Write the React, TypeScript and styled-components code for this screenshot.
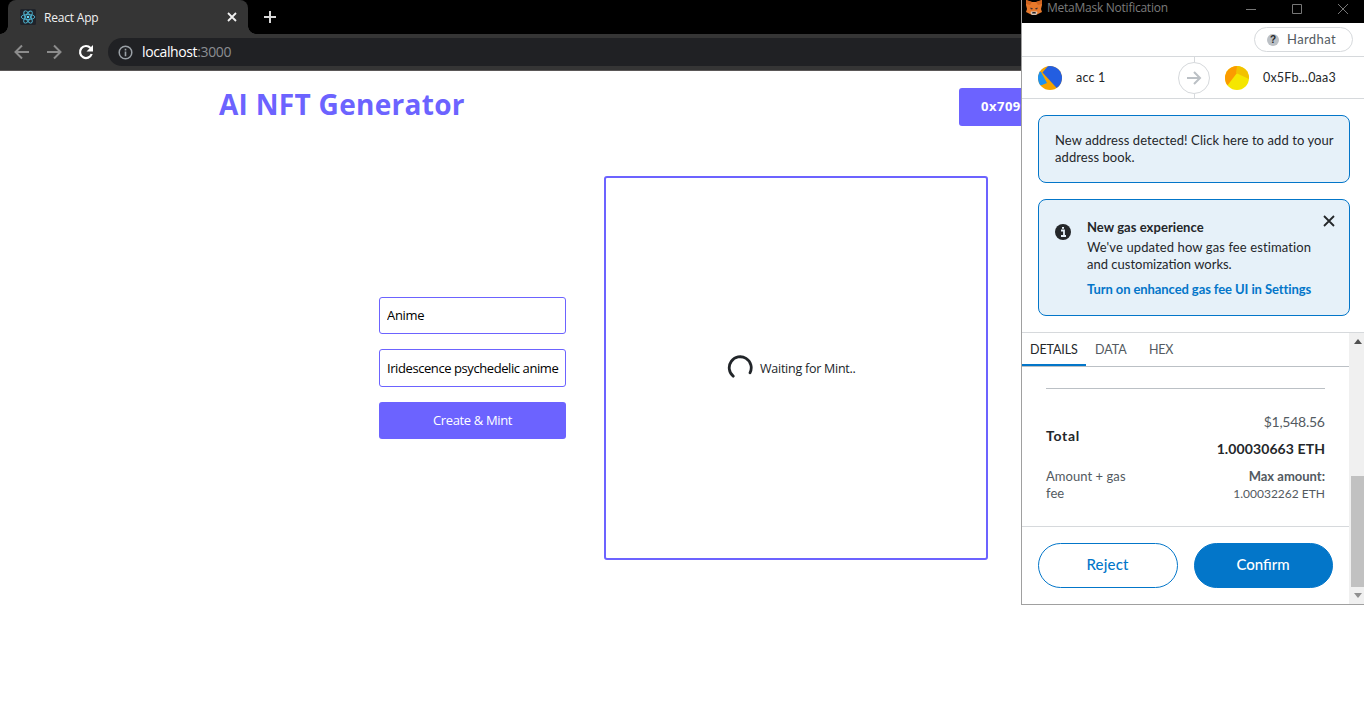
import React from "react";
import styled, { createGlobalStyle } from "styled-components";

const purple = "#6c63ff";
const blue = "#0376c9";
const ink = "#24272a";
const muted = "#535a61";
const line = "#d6d9dc";
const appFont = `"Open Sans", "Liberation Sans", sans-serif`;
const walletFont = `Lato, "Liberation Sans", sans-serif`;

const GlobalStyle = createGlobalStyle`
  *, *::before, *::after { box-sizing: border-box; }
  html, body { margin: 0; background: #fff; overflow: hidden; }
  button, input { font: inherit; }
`;

const Label = styled.span<{
  $size?: number;
  $weight?: number;
  $color?: string;
  $spacing?: number;
  $line?: number;
}>`
  display: block;
  white-space: nowrap;
  font-size: ${(p) => p.$size ?? 12}px;
  font-weight: ${(p) => p.$weight ?? 400};
  color: ${(p) => p.$color ?? ink};
  letter-spacing: ${(p) => p.$spacing ?? 0}px;
  margin-right: ${(p) => -(p.$spacing ?? 0)}px;
  line-height: ${(p) => p.$line ?? 17}px;
`;

const Screen = styled.div`
  position: relative;
  width: 1364px;
  height: 728px;
  overflow: hidden;
  background: #fff;
  font-family: ${appFont};
`;

/* Browser chrome */
const TabStrip = styled.div`
  display: flex;
  height: 34px;
  padding-left: 8px;
  background: #000;
`;

const BrowserTab = styled.div`
  position: relative;
  display: flex;
  align-items: center;
  width: 240px;
  height: 34px;
  padding: 0 10px 0 12px;
  border-radius: 8px 8px 0 0;
  background: #353535;
  &::before,
  &::after {
    content: "";
    position: absolute;
    bottom: 0;
    width: 8px;
    height: 8px;
  }
  &::before {
    left: -8px;
    background: radial-gradient(circle at 0 0, transparent 7.5px, #353535 8px);
  }
  &::after {
    right: -8px;
    background: radial-gradient(circle at 100% 0, transparent 7.5px, #353535 8px);
  }
`;

const TabTitle = styled.div`
  flex: 1;
  padding-left: 8px;
`;

const NewTab = styled.div`
  display: flex;
  align-items: center;
  padding-left: 15px;
`;

const Toolbar = styled.div`
  display: flex;
  align-items: center;
  height: 37px;
  padding-left: 14px;
  background: #353535;
  border-bottom: 1px solid #5a5757;
`;

const NavIcons = styled.div`
  display: flex;
  gap: 16px;
  width: 94px;
`;

const AddressBar = styled.div`
  display: flex;
  align-items: center;
  gap: 9px;
  flex: 1;
  height: 28px;
  padding-left: 10px;
  border-radius: 14px 0 0 14px;
  background: #202124;
`;

const Port = styled.span`
  color: #8b8e92;
`;

/* Generator page */
const PageHeader = styled.header`
  display: flex;
  justify-content: space-between;
  align-items: flex-start;
  width: 926px;
  margin-left: 219px;
  padding-top: 17px;
  height: 105px;
`;

const Title = styled.h1`
  margin: -1px 0 0;
  color: ${purple};
  font-size: 28px;
  line-height: 34px;
  letter-spacing: 0.3px;
  white-space: nowrap;
`;

const AccountButton = styled.button`
  width: 186px;
  height: 38px;
  padding: 0 22px 2px;
  border: 0;
  border-radius: 3px;
  background: ${purple};
  color: #fff;
  font-size: 13px;
  font-weight: 700;
  letter-spacing: 0.5px;
  text-align: left;
`;

const PageBody = styled.main`
  display: flex;
  align-items: center;
  gap: 38px;
  margin-left: 379px;
`;

const Form = styled.form`
  display: flex;
  flex-direction: column;
  gap: 15px;
  width: 187px;
`;

const Field = styled.input<{ $height: number; $spacing: number }>`
  width: 100%;
  height: ${(p) => p.$height}px;
  padding: 0 5px 1px 7px;
  border: 1px solid ${purple};
  border-radius: 3px;
  outline: 0;
  color: #000;
  background: #fff;
  font-size: 13px;
  letter-spacing: ${(p) => p.$spacing}px;
`;

const MintButton = styled.button`
  height: 37px;
  padding: 0 0 1px;
  border: 0;
  border-radius: 3px;
  background: ${purple};
  color: #fff;
  font-size: 13px;
  letter-spacing: -0.35px;
`;

const Preview = styled.section`
  display: flex;
  align-items: center;
  gap: 7px;
  width: 384px;
  height: 384px;
  padding-left: 121px;
  border: 2px solid ${purple};
  border-radius: 3px;
`;

/* Wallet popup window */
const Popup = styled.aside`
  position: absolute;
  top: 0;
  left: 1021px;
  display: flex;
  flex-direction: column;
  width: 343px;
  height: 605px;
  border-left: 1px solid #a0a0a0;
  border-bottom: 1px solid #a0a0a0;
  background: #fff;
  font-family: ${walletFont};
`;

const TitleBar = styled.div`
  display: flex;
  align-items: flex-start;
  height: 23px;
  padding-left: 4px;
  background: #000;
`;

const WindowTitle = styled.div`
  flex: 1;
  padding-left: 5px;
  font-family: ${appFont};
`;

const WindowButtons = styled.div`
  width: 123px;
`;

const NetworkRow = styled.div`
  display: flex;
  justify-content: flex-end;
  height: 34px;
  padding: 4px 11px 0 0;
  border-bottom: 1px solid ${line};
`;

const NetworkPill = styled.div`
  display: flex;
  align-items: center;
  gap: 8px;
  width: 99px;
  height: 25px;
  padding-left: 12px;
  border: 1px solid ${line};
  border-radius: 13px;
`;

const QuestionDot = styled.span`
  width: 12px;
  height: 12px;
  border-radius: 50%;
  background: #bbc0c5;
  color: ${ink};
  font: 700 10px/12px "Liberation Sans", sans-serif;
  text-align: center;
`;

const Accounts = styled.div`
  display: flex;
  height: 42px;
  border-bottom: 1px solid ${line};
`;

const Party = styled.div<{ $width: number; $left: number }>`
  display: flex;
  align-items: center;
  gap: 14px;
  width: ${(p) => p.$width}px;
  padding-left: ${(p) => p.$left}px;
`;

const Divider = styled.div`
  display: flex;
  flex-direction: column;
  align-items: center;
  width: 32px;
  &::before,
  &::after {
    content: "";
    flex: 1;
    width: 1px;
    background: ${line};
  }
`;

const ArrowCircle = styled.div`
  display: grid;
  place-items: center;
  width: 32px;
  height: 32px;
  border: 1px solid ${line};
  border-radius: 50%;
`;

const Notices = styled.div`
  display: flex;
  flex-direction: column;
  gap: 16px;
  height: 234px;
  padding: 16px 14px 0 16px;
  border-bottom: 1px solid ${line};
`;

const Notice = styled.div<{ $height: number; $top: number }>`
  display: flex;
  flex: none;
  height: ${(p) => p.$height}px;
  padding: ${(p) => p.$top}px 14px 0 16px;
  border: 1px solid ${blue};
  border-radius: 8px;
  background: #e6f1f9;
`;

const NoticeIcon = styled.div`
  width: 32px;
  padding-top: 5px;
`;

const NoticeText = styled.div`
  flex: 1;
`;

const NoticeTitle = styled.div`
  padding-bottom: 3px;
`;

const NoticeLink = styled.div`
  padding-top: 8px;
`;

const CloseIcon = styled.div`
  margin-top: -8px;
  width: 12px;
`;

const Scroller = styled.div`
  display: flex;
  flex: 1;
`;

const Content = styled.div`
  width: 327px;
`;

const Tabs = styled.div`
  display: flex;
  height: 34px;
  border-bottom: 1px solid #bbc0c5;
`;

const TabItem = styled.div<{ $active?: boolean; $width: number; $left: number }>`
  width: ${(p) => p.$width}px;
  height: 33px;
  padding: 8px 0 0 ${(p) => p.$left}px;
  border-bottom: ${(p) => (p.$active ? `2px solid ${blue}` : "0")};
`;

const Totals = styled.div`
  height: 160px;
  padding: 21px 24px 0;
  border-bottom: 1px solid ${line};
`;

const Rule = styled.div`
  height: 1px;
  margin-bottom: 19px;
  background: #bbc0c5;
`;

const TotalRow = styled.div<{ $height: number }>`
  display: flex;
  justify-content: space-between;
  align-items: center;
  height: ${(p) => p.$height}px;
`;

const Amounts = styled.div`
  display: flex;
  flex-direction: column;
  align-items: flex-end;
`;

const Actions = styled.div`
  display: flex;
  gap: 16px;
  padding: 16px 0 0 16px;
`;

const ActionButton = styled.button<{ $primary?: boolean }>`
  display: flex;
  justify-content: center;
  align-items: center;
  width: ${(p) => (p.$primary ? 139 : 140)}px;
  height: 45px;
  padding: 0 1px 2px 0;
  border: 1px solid ${blue};
  border-radius: 23px;
  background: ${(p) => (p.$primary ? blue : "#fff")};
`;

const Scrollbar = styled.div`
  display: flex;
  flex-direction: column;
  width: 15px;
  background: #f0f0f0;
`;

const Thumb = styled.div`
  height: 111px;
  margin: 127px 0 0 2px;
  background: #c1c1c1;
`;

const ScrollArrow = styled.div`
  display: grid;
  place-items: center;
  height: 16px;
  padding-left: 2px;
`;

const ReactLogo = () => (
  <svg width="16" height="16" viewBox="0 0 16 16">
    <rect width="16" height="16" rx="1.5" fill="#20232a" />
    <g fill="none" stroke="#4fb6d3" strokeWidth="0.9">
      <ellipse cx="8" cy="8" rx="6.8" ry="2.6" transform="rotate(0 8 8)" />
      <ellipse cx="8" cy="8" rx="6.8" ry="2.6" transform="rotate(60 8 8)" />
      <ellipse cx="8" cy="8" rx="6.8" ry="2.6" transform="rotate(120 8 8)" />
    </g>
    <circle cx="8" cy="8" r="1.3" fill="#61dafb" />
  </svg>
);

const Fox = () => (
  <svg width="16" height="15" viewBox="0 0 16 15">
    <path d="M0 0l6 2h4l6-2v5l-1 4 1 3-4 2-2 1H6l-2-1-4-2 1-3-1-4z" fill="#e8792b" />
    <path d="M0 0l6 2-2 3-4-1zM16 0l-6 2 2 3 4-1z" fill="#cf6420" />
    <path d="M4.5 7.5l2.5 1-1 1-1.5-.5zM11.5 7.5L9 8.500l1 1 1.500-.5z" fill="#3b3136" />
    <path d="M5 11.500h6l.5 1.500-1.500 2H6l-1.500-2z" fill="#d5c5b8" />
    <path d="M6.500 12h3l.5 1.500H6z" fill="#26252c" />
  </svg>
);

export default function App() {
  return (
    <Screen>
      <GlobalStyle />
      <TabStrip>
        <BrowserTab>
          <ReactLogo />
          <TabTitle>
            <Label $color="#f1f1f1" $spacing={-0.2}>React App</Label>
          </TabTitle>
          <svg width="12" height="12" viewBox="0 0 12 12" stroke="#f1f1f1" strokeWidth="1.8">
            <path d="M2 2l8 8M10 2l-8 8" />
          </svg>
        </BrowserTab>
        <NewTab>
          <svg width="14" height="14" viewBox="0 0 14 14" stroke="#d8d8d8" strokeWidth="2">
            <path d="M7 1v12M1 7h12" />
          </svg>
        </NewTab>
      </TabStrip>
      <Toolbar>
        <NavIcons>
          <svg width="16" height="16" viewBox="0 0 16 16" fill="none" stroke="#8c8c8c" strokeWidth="2">
            <path d="M15 8H2M8 1.5L1.5 8 8 14.5" />
          </svg>
          <svg width="16" height="16" viewBox="0 0 16 16" fill="none" stroke="#8c8c8c" strokeWidth="2">
            <path d="M1 8h13M8 1.5L14.5 8 8 14.5" />
          </svg>
          <svg width="16" height="16" viewBox="0 0 16 16" fill="none" stroke="#fff" strokeWidth="2.2">
            <path d="M13.7 10A6 6 0 1 1 12.5 4" />
            <path d="M15 1v6.5H8.5z" fill="#fff" stroke="none" />
          </svg>
        </NavIcons>
        <AddressBar>
          <svg width="15" height="15" viewBox="0 0 15 15">
            <circle cx="7.5" cy="7.5" r="6.3" fill="none" stroke="#9aa0a6" strokeWidth="1.5" />
            <path d="M7.5 6.6v4.6M7.5 3.7v1.7" stroke="#9aa0a6" strokeWidth="1.6" />
          </svg>
          <Label $size={14} $color="#fff" $spacing={-0.38} $line={20}>
            localhost<Port>:3000</Port>
          </Label>
        </AddressBar>
      </Toolbar>

      <PageHeader>
        <Title>AI NFT Generator</Title>
        <AccountButton>0x7099...79C8</AccountButton>
      </PageHeader>
      <PageBody>
        <Form>
          <Field readOnly value="Anime" $height={37} $spacing={-0.3} />
          <Field readOnly value="Iridescence psychedelic anime" $height={38} $spacing={-0.42} />
          <MintButton type="button">Create &amp; Mint</MintButton>
        </Form>
        <Preview>
          <svg width="26" height="26" viewBox="0 0 26 26" fill="none" stroke="#212529" strokeWidth="2.8" strokeLinecap="round">
            <path d="M6.2 21.2A11 11 0 1 1 23 17.8" />
          </svg>
          <Label $size={12.5} $spacing={-0.25} $color="#212529">Waiting for Mint..</Label>
        </Preview>
      </PageBody>

      <Popup>
        <TitleBar>
          <Fox />
          <WindowTitle>
            <Label $color="#7b7b7b" $line={15} $spacing={-0.25}>MetaMask Notification</Label>
          </WindowTitle>
          <WindowButtons>
            <svg width="119" height="14" viewBox="0 0 119 14" fill="none" stroke="#777">
              <path d="M5 7.5h10M51.5 2.5h9v9h-9zM97 2l10 10M107 2L97 12" />
            </svg>
          </WindowButtons>
        </TitleBar>
        <NetworkRow>
          <NetworkPill>
            <QuestionDot>?</QuestionDot>
            <Label $size={13} $spacing={0.4} $color={muted}>Hardhat</Label>
          </NetworkPill>
        </NetworkRow>
        <Accounts>
          <Party $width={156} $left={16}>
            <svg width="24" height="24" viewBox="0 0 24 24">
              <defs>
                <clipPath id="from"><circle cx="12" cy="12" r="12" /></clipPath>
              </defs>
              <g clipPath="url(#from)">
                <path d="M0 0h24v24H0z" fill="#f5a300" />
                <path d="M0 5l3 1 6 11-5 2-4 1z" fill="#1c91f2" />
                <path d="M10 0h14v24h-3.500L4.500 6.500z" fill="#235ee1" />
              </g>
            </svg>
            <Label $size={12.5} $spacing={0.2}>acc 1</Label>
          </Party>
          <Divider>
            <ArrowCircle>
              <svg width="16" height="16" viewBox="0 0 16 16" fill="none" stroke="#bbc0c5" strokeWidth="2">
                <path d="M1 8h13M8 2l6 6-6 6" />
              </svg>
            </ArrowCircle>
          </Divider>
          <Party $width={154} $left={15}>
            <svg width="24" height="24" viewBox="0 0 24 24">
              <defs>
                <clipPath id="to"><circle cx="12" cy="12" r="12" /></clipPath>
              </defs>
              <g clipPath="url(#to)">
                <path d="M0 0h24v24H0z" fill="#f5e600" />
                <path d="M0 0h12v7L2 20l-2-3z" fill="#fb9b00" />
                <path d="M12 0h12v13L11 7z" fill="#f2c200" />
              </g>
            </svg>
            <Label $size={12.5} $spacing={0.2}>0x5Fb...0aa3</Label>
          </Party>
        </Accounts>
        <Notices>
          <Notice $height={68} $top={16}>
            <NoticeText>
              <Label $size={13} $spacing={0.09}>New address detected! Click here to add to your</Label>
              <Label $size={13} $spacing={0.07}>address book.</Label>
            </NoticeText>
          </Notice>
          <Notice $height={117} $top={19}>
            <NoticeIcon>
              <svg width="16" height="16" viewBox="0 0 16 16">
                <circle cx="8" cy="8" r="8" fill={ink} />
                <path d="M6 6.5h3V12M6 12h5M7 3.8h2" fill="none" stroke="#e6f1f9" strokeWidth="1.8" />
              </svg>
            </NoticeIcon>
            <NoticeText>
              <NoticeTitle>
                <Label $size={13} $weight={700} $spacing={0.05}>New gas experience</Label>
              </NoticeTitle>
              <Label $size={13} $spacing={0.11}>We've updated how gas fee estimation</Label>
              <Label $size={13} $spacing={0}>and customization works.</Label>
              <NoticeLink>
                <Label $size={13} $weight={700} $color={blue} $spacing={-0.09}>
                  Turn on enhanced gas fee UI in Settings
                </Label>
              </NoticeLink>
            </NoticeText>
            <CloseIcon>
              <svg width="12" height="12" viewBox="0 0 12 12" stroke={ink} strokeWidth="1.8">
                <path d="M1 1l10 10M11 1L1 11" />
              </svg>
            </CloseIcon>
          </Notice>
        </Notices>
        <Scroller>
          <Content>
            <Tabs>
              <TabItem $active $width={64} $left={8}><Label $size={12.5} $spacing={-0.1}>DETAILS</Label></TabItem>
              <TabItem $width={55} $left={9}><Label $size={12.5} $color={muted}>DATA</Label></TabItem>
              <TabItem $width={50} $left={8}><Label $size={12.5} $color={muted} $spacing={-0.2}>HEX</Label></TabItem>
            </Tabs>
            <Totals>
              <Rule />
              <TotalRow $height={54}>
                <Label $size={14} $weight={700} $spacing={0.7}>Total</Label>
                <Amounts>
                  <Label $size={14} $color={muted} $line={27} $spacing={-0.25}>$1,548.56</Label>
                  <Label $size={14} $weight={700} $line={27} $spacing={0.1}>1.00030663 ETH</Label>
                </Amounts>
              </TotalRow>
              <TotalRow $height={45}>
                <div>
                  <Label $size={13} $color={muted} $spacing={0.05}>Amount + gas</Label>
                  <Label $size={13} $color={muted} $spacing={0.05}>fee</Label>
                </div>
                <Amounts>
                  <Label $size={13} $weight={700} $color={muted}>Max amount:</Label>
                  <Label $size={12} $color={muted}>1.00032262 ETH</Label>
                </Amounts>
              </TotalRow>
            </Totals>
            <Actions>
              <ActionButton><Label $size={15} $weight={500} $color={blue} $spacing={0.2}>Reject</Label></ActionButton>
              <ActionButton $primary><Label $size={15} $weight={500} $color="#fff" $spacing={0}>Confirm</Label></ActionButton>
            </Actions>
          </Content>
          <Scrollbar>
            <ScrollArrow>
              <svg width="8" height="5" viewBox="0 0 8 5"><path d="M0 5l4-5 4 5z" fill="#505050" /></svg>
            </ScrollArrow>
            <Thumb />
            <ScrollArrow>
              <svg width="8" height="5" viewBox="0 0 8 5"><path d="M0 0l4 5 4-5z" fill="#909090" /></svg>
            </ScrollArrow>
          </Scrollbar>
        </Scroller>
      </Popup>
    </Screen>
  );
}
